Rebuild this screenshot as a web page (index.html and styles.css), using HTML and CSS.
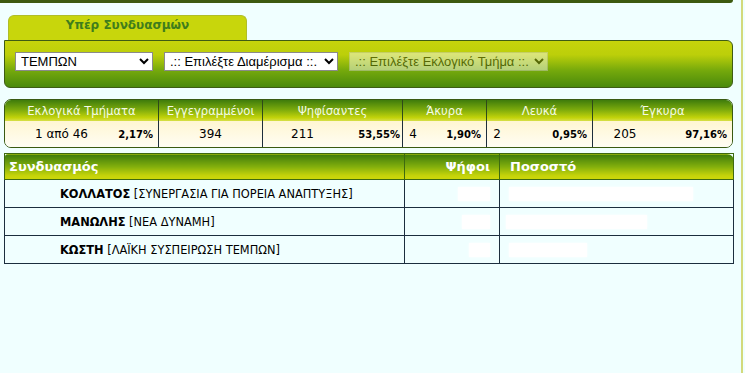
FILE: index.html
```html
<!DOCTYPE html>
<html lang="el">
<head>
    <meta charset="UTF-8">
    <meta name="viewport" content="width=device-width, initial-scale=1.0">
    <title>Αποτελέσματα Εκλογών</title>
    <link rel="stylesheet" href="styles.css">
</head>
<body>
    <div class="page">
        <div class="topbar"></div>

        <div class="tab">Υπέρ Συνδυασμών</div>
        <div class="filters">
            <select class="sel sel-district">
                <option>ΤΕΜΠΩΝ</option>
            </select>
            <select class="sel sel-area">
                <option>.:: Επιλέξτε Διαμέρισμα ::.</option>
            </select>
            <select class="sel sel-section" disabled>
                <option>.:: Επιλέξτε Εκλογικό Τμήμα ::.</option>
            </select>
        </div>

        <table class="stats">
            <colgroup>
                <col style="width: 153px">
                <col style="width: 104px">
                <col style="width: 140px">
                <col style="width: 84px">
                <col style="width: 106px">
                <col style="width: 140px">
            </colgroup>
            <tr class="stats-head">
                <th>Εκλογικά Τμήματα</th>
                <th>Εγγεγραμμένοι</th>
                <th>Ψηφίσαντες</th>
                <th>Άκυρα</th>
                <th>Λευκά</th>
                <th>Έγκυρα</th>
            </tr>
            <tr class="stats-data">
                <td class="st-sections">
                    <table class="pair">
                        <tr><td class="num">1 από 46</td><td class="pct">2,17%</td></tr>
                    </table>
                </td>
                <td class="single">394</td>
                <td class="st-voted">
                    <table class="pair">
                        <tr><td class="num">211</td><td class="pct">53,55%</td></tr>
                    </table>
                </td>
                <td class="st-small">
                    <table class="pair">
                        <tr><td class="num">4</td><td class="pct">1,90%</td></tr>
                    </table>
                </td>
                <td class="st-small">
                    <table class="pair">
                        <tr><td class="num">2</td><td class="pct">0,95%</td></tr>
                    </table>
                </td>
                <td class="st-valid">
                    <table class="pair">
                        <tr><td class="num">205</td><td class="pct">97,16%</td></tr>
                    </table>
                </td>
            </tr>
        </table>

        <table class="results">
            <colgroup>
                <col style="width: 400px">
                <col style="width: 95px">
                <col style="width: 234px">
            </colgroup>
            <tr class="results-head">
                <th class="col-party">Συνδυασμός</th>
                <th class="col-votes">Ψήφοι</th>
                <th class="col-pct">Ποσοστό</th>
            </tr>
            <tr>
                <td class="party"><b>ΚΟΛΛΑΤΟΣ</b> [ΣΥΝΕΡΓΑΣΙΑ ΓΙΑ ΠΟΡΕΙΑ ΑΝΑΠΤΥΞΗΣ]</td>
                <td class="votes"><span class="hidden-num" style="width: 32px"></span></td>
                <td class="pct-cell"><span class="bar" style="width: 184px"></span></td>
            </tr>
            <tr>
                <td class="party"><b>ΜΑΝΩΛΗΣ</b> [ΝΕΑ ΔΥΝΑΜΗ]</td>
                <td class="votes"><span class="hidden-num" style="width: 28px"></span></td>
                <td class="pct-cell"><span class="bar bar-shift" style="width: 141px"></span></td>
            </tr>
            <tr>
                <td class="party"><b>ΚΩΣΤΗ</b> [ΛΑΪΚΗ ΣΥΣΠΕΙΡΩΣΗ ΤΕΜΠΩΝ]</td>
                <td class="votes"><span class="hidden-num" style="width: 21px"></span></td>
                <td class="pct-cell"><span class="bar" style="width: 78px"></span></td>
            </tr>
        </table>
    </div>
</body>
</html>
```

FILE: styles.css
```css
body {
    margin: 0;
    background: #f0ffff;
    font-family: "DejaVu Sans", Verdana, sans-serif;
    color: #000;
}

.page {
    width: 743px;
    min-height: 373px;
    box-sizing: border-box;
    padding: 0 8px 0 4px;
    border-right: 2px solid #d3da7c;
}

.topbar {
    height: 3px;
    margin-left: -4px;
    background: #3d5a10;
    border-bottom-right-radius: 3px;
}

/* tab + filter panel */

.tab {
    width: 239px;
    height: 25px;
    margin: 12px 0 0 4px;
    box-sizing: border-box;
    padding-top: 2px;
    background: #c8d60c;
    border: 1px solid #b0be28;
    border-bottom: none;
    border-radius: 6px 6px 0 0;
    text-align: center;
    font-size: 12px;
    font-weight: bold;
    color: #3f7d1c;
}

.filters {
    display: flex;
    gap: 11px;
    height: 48px;
    box-sizing: border-box;
    padding: 11px 10px 0;
    background: linear-gradient(#c6d40b 0%, #bccf0a 30%, #74a80c 65%, #4a8a0c 100%);
    border: 1px solid #3e5c14;
    border-radius: 0 6px 6px 6px;
}

.sel {
    height: 19px;
    padding: 0 0 0 1px;
    font-family: "Liberation Sans", Arial, sans-serif;
    font-size: 13px;
    color: #000;
    background: #fff;
    border: 1px solid #8a8a8a;
    border-radius: 0;
}

.sel-district {
    width: 138px;
}

.sel-area {
    width: 174px;
}

.sel-section {
    width: 199px;
    opacity: 0.45;
    border-color: #d0d0d0;
}

/* totals table */

.stats {
    width: 100%;
    margin-top: 11px;
    table-layout: fixed;
    border-collapse: separate;
    border-spacing: 0;
    border: 1px solid #3a5a12;
    border-radius: 7px;
    overflow: hidden;
}

.stats th,
.stats-data > td {
    padding: 0;
}

.stats-head th {
    height: 21px;
    font-size: 11.6px;
    font-weight: normal;
    color: #f4fbe6;
    background: linear-gradient(#3f7c0c 0%, #7aa90c 45%, #c4d40a 85%, #d6df4a 100%);
    border-left: 1px solid #2f4a1a;
}

.stats-head th:first-child,
.stats-data > td:first-child {
    border-left: none;
}

.stats-data > td {
    height: 26px;
    background: linear-gradient(#fff6d2, #fffdf4);
    border-left: 1px solid #1e2e3c;
    font-size: 12px;
}

.stats-data .single {
    text-align: center;
}

.pair {
    width: 100%;
    border-collapse: collapse;
}

.pair td {
    padding: 0;
}

.pair .num {
    text-align: center;
    font-size: 12px;
    white-space: nowrap;
}

.pair .pct {
    text-align: right;
    font-size: 10px;
    font-weight: bold;
    padding-right: 5px;
    white-space: nowrap;
}

.st-sections .num { width: 113px; }
.st-voted .num { width: 79px; }
.st-small .num { width: 20px; }
.st-valid .num { width: 64px; }
.st-voted .pct { padding-right: 2px; }

/* party results */

.results {
    width: 100%;
    margin-top: 5px;
    table-layout: fixed;
    border-collapse: collapse;
    font-size: 11.4px;
}

.results-head th {
    height: 25px;
    padding: 0 4px;
    font-size: 13px;
    font-weight: bold;
    color: #fff;
    background: linear-gradient(#3e7b0c 0%, #84b00c 50%, #c6d40a 85%, #ccd80a 100%);
    border: 1px solid #3e6a10;
}

.results-head .col-party {
    text-align: left;
    border-top-left-radius: 3px;
}

.results-head .col-votes {
    text-align: right;
    padding-right: 9px;
}

.results-head .col-pct {
    text-align: left;
    padding-left: 10px;
    border-top-right-radius: 7px;
}

.results td {
    height: 27px;
    padding-top: 0;
    padding-bottom: 0;
    border: 1px solid #1c2e3e;
}

.results .party {
    padding-left: 55px;
}

.results .votes {
    text-align: right;
    padding-right: 9px;
}

.hidden-num {
    display: inline-block;
    height: 14px;
    vertical-align: middle;
    background: #fff;
    box-shadow: 0 0 2px #fff;
}

.results .pct-cell {
    padding-left: 9px;
}

.bar {
    display: block;
    height: 14px;
    background: #fff;
    box-shadow: 0 0 2px #fff;
}

.bar-shift {
    margin-left: -3px;
}
```
